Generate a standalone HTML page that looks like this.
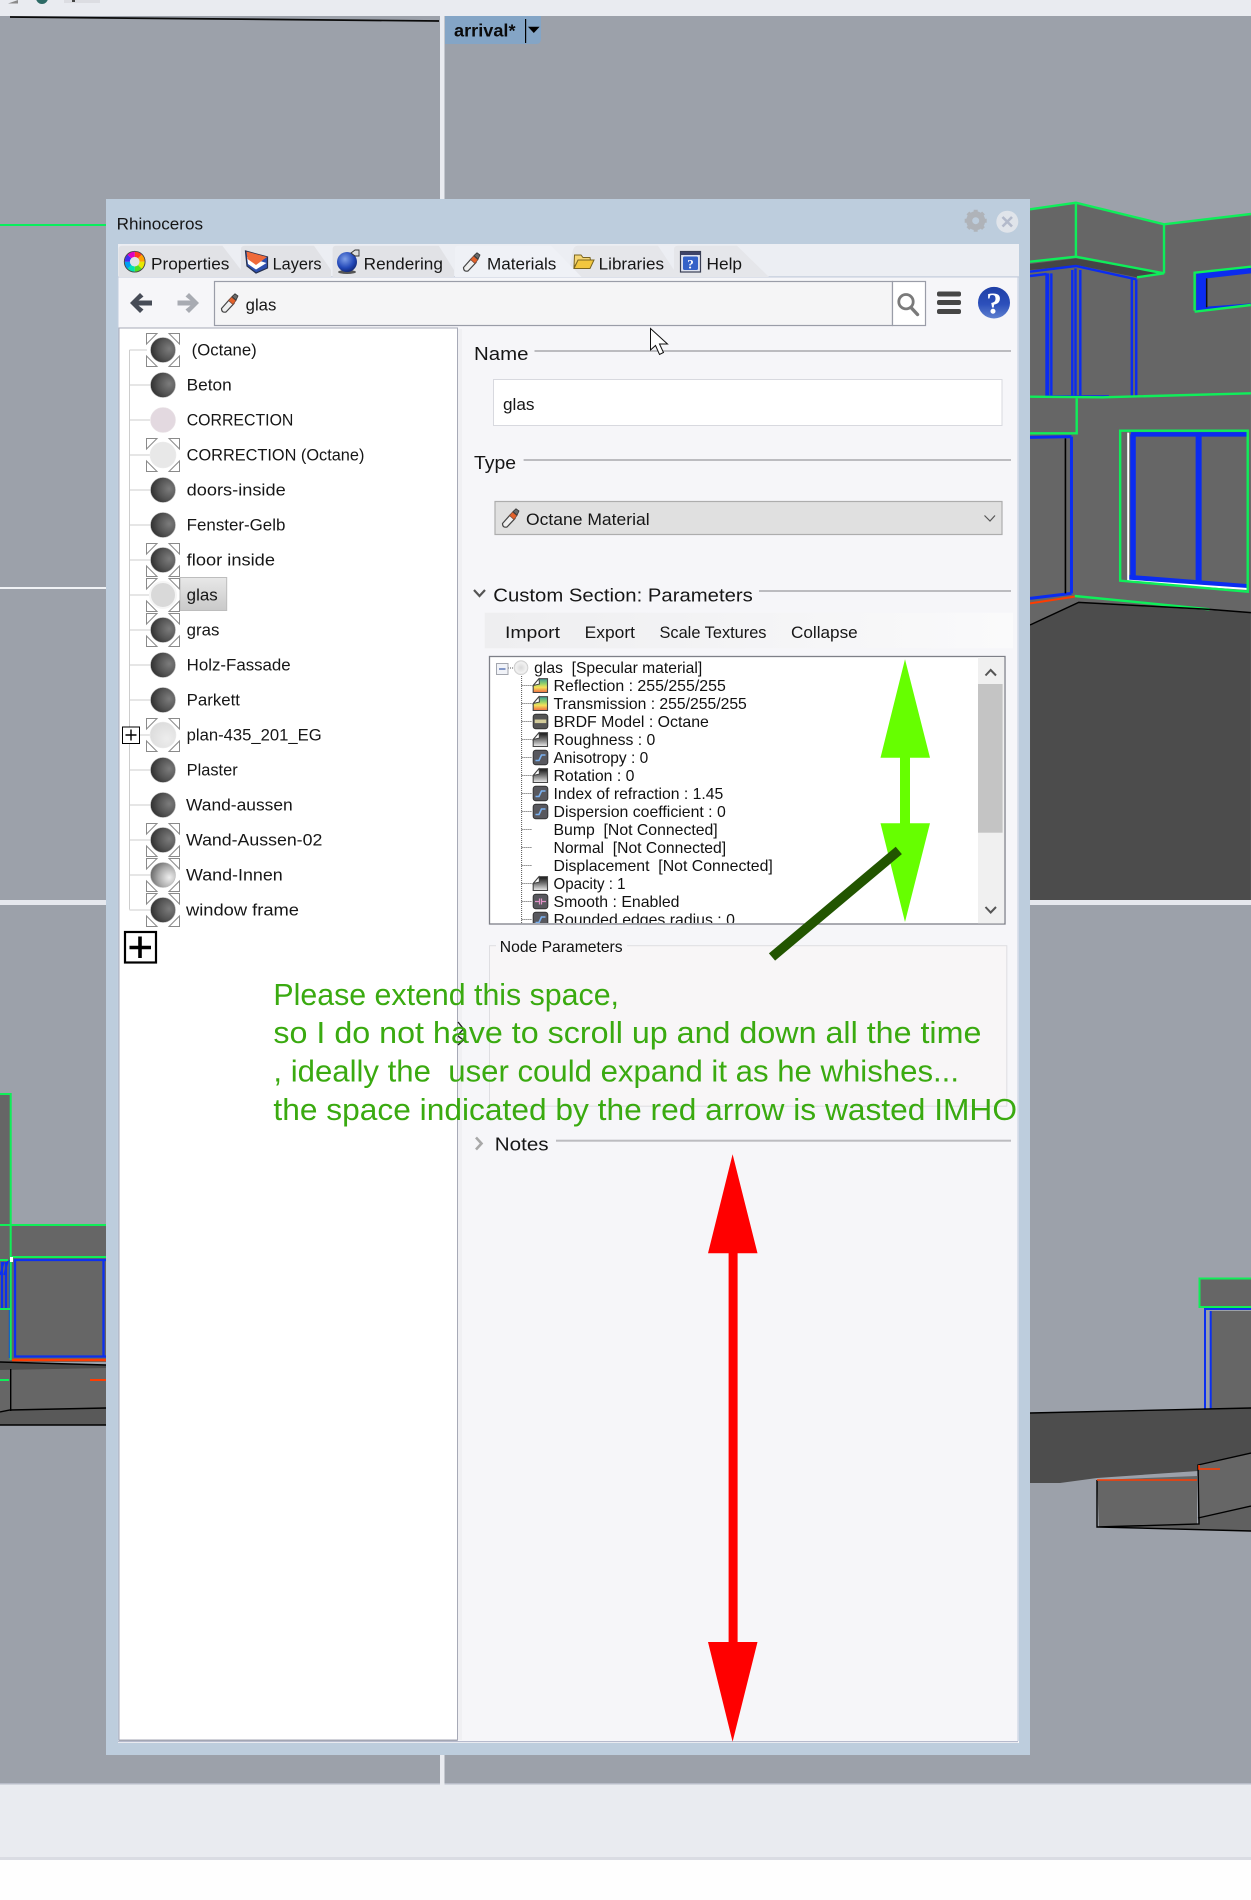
<!DOCTYPE html>
<html lang="en">
<head>
<meta charset="utf-8">
<title>Rhinoceros materials panel</title>
<style>
html,body{margin:0;padding:0;background:#fff;width:1251px;height:1900px;overflow:hidden}
svg{display:block}
text{font-family:"Liberation Sans",sans-serif;fill:#161616;white-space:pre}
.l{font-size:16.3px}
.tab{font-size:16.8px}
.h{font-size:18.5px}
.p{font-size:15.6px;fill:#111}
.a{font-size:31px;fill:#3aaa10}
.ns *{vector-effect:non-scaling-stroke}
</style>
</head>
<body>
<svg xmlns="http://www.w3.org/2000/svg" width="1251" height="1900" viewBox="0 0 1251 1900">
<defs>
<radialGradient id="sd" cx=".75" cy=".45" r=".85"><stop offset="0" stop-color="#7c7c7c"/><stop offset=".5" stop-color="#555"/><stop offset="1" stop-color="#242424"/></radialGradient>
<radialGradient id="sl" cx=".75" cy=".6" r=".85"><stop offset="0" stop-color="#eeeeee"/><stop offset=".5" stop-color="#acacac"/><stop offset="1" stop-color="#585858"/></radialGradient>
<radialGradient id="sp" cx=".65" cy=".65" r=".7"><stop offset="0" stop-color="#ededed"/><stop offset="1" stop-color="#dcdcdc"/></radialGradient>
<radialGradient id="sr" cx=".5" cy=".5" r=".55"><stop offset="0" stop-color="#d9d9d9"/><stop offset=".7" stop-color="#f2f2f2"/><stop offset="1" stop-color="#c8c8c8"/></radialGradient>
<radialGradient id="blue" cx=".4" cy=".35" r=".75"><stop offset="0" stop-color="#7f9fe8"/><stop offset=".6" stop-color="#2348b8"/><stop offset="1" stop-color="#0d1f66"/></radialGradient>
<linearGradient id="hb" x1="0" y1="0" x2="0" y2="1"><stop offset="0" stop-color="#1f3fa6"/><stop offset=".55" stop-color="#2c50bb"/><stop offset="1" stop-color="#5f80cf"/></linearGradient>
<linearGradient id="sel" x1="0" y1="0" x2="0" y2="1"><stop offset="0" stop-color="#e8e8e8"/><stop offset="1" stop-color="#c9c9c9"/></linearGradient>
<linearGradient id="strip" x1="0" y1="0" x2="1" y2="0"><stop offset="0" stop-color="#eeeef0"/><stop offset="1" stop-color="#fafafb"/></linearGradient>
<linearGradient id="rb" x1="0" y1="0" x2="0" y2="1"><stop offset="0" stop-color="#3a9a9a"/><stop offset=".35" stop-color="#8fd06a"/><stop offset=".62" stop-color="#f5e25a"/><stop offset="1" stop-color="#ee6a44"/></linearGradient>
<linearGradient id="gy" x1="0" y1="0" x2="0" y2="1"><stop offset="0" stop-color="#111"/><stop offset=".5" stop-color="#777"/><stop offset="1" stop-color="#eee"/></linearGradient>
<clipPath id="treeclip"><rect x="490" y="657" width="488" height="266"/></clipPath>
<g id="br" fill="none" stroke="#8a8a8a" stroke-width="1">
<path d="M146.5 333.5h10.5l-10.5 10.5zM179.5 333.5h-10.5l10.5 10.5zM146.5 366.5h10.5l-10.5-10.5zM179.5 366.5h-10.5l10.5-10.5z"/>
</g>
<g id="tube">
<path d="M1.5 15.5 9.5 6.5 14 10.5 6 19Q1.5 20 1.5 15.5Z" fill="#eee" stroke="#444" stroke-width="1.2"/>
<path d="M8.5 7.5 11.5 4 16 7.5 13 11.5Z" fill="#e4622b" stroke="#7a4a3a" stroke-width=".8"/>
<path d="M12 3.5 15 .8 18 3 16 7.2Z" fill="#6a6a6a" stroke="#333" stroke-width=".8"/>
</g>
<g id="crb"><path d="M.7 15V8L6.5 1.2H15V15Z" fill="url(#rb)" stroke="#444" stroke-width="1.1"/><path d="M.7 8 6.5 1.2 7 6.5Z" fill="#fff" stroke="#444" stroke-width="1"/></g>
<g id="cgy"><path d="M.7 15V8L6.5 1.2H15V15Z" fill="url(#gy)" stroke="#444" stroke-width="1.1"/><path d="M.7 8 6.5 1.2 7 6.5Z" fill="#fff" stroke="#444" stroke-width="1"/></g>
<g id="cbx"><rect x=".7" y=".7" width="14.6" height="14.6" rx="2.5" fill="#58585e" stroke="#333"/><path d="M3 11H6.5L9 5.5H13" fill="none" stroke="#7ab0ee" stroke-width="1.6"/></g>
<g id="cbr"><rect x=".7" y=".7" width="14.6" height="14.6" rx="2.5" fill="#555" stroke="#333"/><rect x="2.2" y="6" width="11.6" height="3.6" fill="#d3cc9a"/></g>
<g id="csm"><rect x=".7" y=".7" width="14.6" height="14.6" rx="2.5" fill="#58585e" stroke="#333"/><path d="M2.5 8H7M9 8H13.5M7 5V11M9 5V11" fill="none" stroke="#e292c8" stroke-width="1.2"/></g>
</defs>

<!-- background -->
<rect width="1251" height="1900" fill="#fefefe"/>
<rect width="1251" height="16" fill="#e9ebf0"/>
<path d="M8 3.5 18 0V3.5Z" fill="#8a8a8a"/>
<circle cx="42" cy="-2" r="6" fill="#2d6a66"/>
<rect x="64" y="0" width="36" height="3" fill="#dcdde2"/><rect x="72" y="0" width="3" height="2" fill="#444"/>
<rect y="16" width="1251" height="1767" fill="#9ca1aa"/>
<path d="M10 17 439 21" stroke="#0a0a0a" stroke-width="1.7"/>

<!-- upper-right building -->
<g class="ns" transform="translate(620,190) scale(.40238,.33333)">
<path d="M1019 58 1133 38 1352 103 1568 72V1268L1465 1258 1140 1237 1019 1305Z" fill="#666"/>
<path d="M1019 1305 1140 1237 1568 1268V2130H1019Z" fill="#4c4c4c"/>
<path d="M1019 222 1133 205 1345 250 1285 262 1140 226 1019 240Z" fill="#454545"/>
<g fill="none" stroke="#0b2cf0" stroke-width="2.4">
<path d="M1019 245 1133 228 1283 268"/>
<path d="M1019 258 1060 252"/>
<path d="M1072 250V618M1124 240V618M1132 235V618M1144 240V618M1272 268V618M1283 268V618"/>
<path d="M1058 618H1215" stroke-width="1.5"/>
<path d="M1019 742 1122 740M1122 740V1210M1019 1225 1122 1210" stroke-width="3"/>
</g>
<path d="M1062 250V618" stroke="#0b2cf0" stroke-width="4" fill="none"/>
<path d="M1432 250 1568 232V250L1458 265V350L1568 340V348L1432 362Z" fill="#0b2cf0"/>
<path d="M1107 745V1210" stroke="#000" stroke-width="1.6" fill="none"/>
<path d="M1458 265V352" stroke="#111" stroke-width="1.5" fill="none"/>
<g fill="none" stroke="#0b2cf0">
<path d="M1270 733H1560" stroke-width="4.5"/>
<path d="M1275 733V1162" stroke-width="5.5"/>
<path d="M1438 733V1172" stroke-width="6"/>
<path d="M1265 1162 1560 1190" stroke-width="5"/>
</g>
<path d="M1263 728V1172L1560 1197" fill="none" stroke="#fff" stroke-width="2"/>
<g fill="none" stroke="#0fee5a" stroke-width="2.4">
<path d="M1019 58 1133 38 1352 103 1568 72"/>
<path d="M1133 38V200M1352 103V250"/>
<path d="M1019 215 1133 200 1352 250 1285 262"/>
<path d="M1019 620 1200 622 1568 610"/>
<path d="M1135 625V730H1019"/>
<path d="M1428 362V248L1568 230M1428 365 1568 345"/>
<path d="M1243 722H1560V1205L1243 1172Z"/>
<path d="M1130 1218 1465 1258"/>
</g>
<path d="M1019 1240 1130 1220" stroke="#ff3c00" stroke-width="2" fill="none"/>
<path d="M1019 1305 1140 1237 1465 1258 1568 1268" stroke="#000" stroke-width="1.5" fill="none"/>
</g>

<!-- thin lines/dividers -->
<rect y="587" width="106" height="2" fill="#f0f2f5"/>
<rect y="900" width="1251" height="5" fill="#e6e8ee"/>
<rect x="440" y="16" width="4.5" height="1769" fill="#e9ebf0"/>
<rect y="224" width="106" height="2" fill="#08ee5c"/>

<!-- lower-left scene -->
<rect y="1094" width="10" height="131" fill="#666"/>
<rect y="1225" width="106" height="137" fill="#666"/>
<path d="M0 1362 106 1365V1408L10 1410 0 1412Z" fill="#666"/>
<path d="M0 1362 106 1365V1368L0 1370Z" fill="#4c4c4c"/>
<path d="M0 1412 10 1410 106 1408V1425L0 1425Z" fill="#595959"/>
<g fill="none">
<path d="M10.7 1369V1411M0 1412 10 1410 106 1408M0 1425H106M0 1362 106 1365" stroke="#000" stroke-width="1.4"/>
<path d="M15 1260H103.5V1356.5H15ZM103.5 1356.5H106M103.5 1260H106M10 1260V1358M2 1262V1308M6 1262V1308" stroke="#0c30f0" stroke-width="2.3"/>
<path d="M0 1275 4 1262M4 1275 8 1261" stroke="#0c30f0" stroke-width="1.5"/>
<path d="M0 1094H10.7V1360M0 1225H106M12 1257H106M0 1260H8M0 1309H10M0 1380H9" stroke="#10ee58" stroke-width="2"/>
<path d="M12 1360H106" stroke="#ff3c00" stroke-width="2.6"/>
<path d="M90 1380H106" stroke="#ff3c00" stroke-width="2"/>
</g>
<rect x="10" y="1257" width="3" height="5" fill="#fff"/>

<!-- lower-right scene -->
<rect x="1211" y="1311" width="40" height="100" fill="#666"/>
<rect x="1199" y="1278" width="52" height="29" fill="#666"/>
<path d="M1205 1410V1309H1251M1210.7 1410V1311" fill="none" stroke="#0c30f0" stroke-width="2"/>
<path d="M1251 1278.5H1199.5V1307H1251" fill="none" stroke="#10ee58" stroke-width="2"/>
<path d="M1097 1480 1197 1476V1524L1099 1527Z" fill="#666"/>
<path d="M1198 1465 1251 1453V1506L1198 1518Z" fill="#666"/>
<path d="M1198 1518 1251 1506V1531L1099 1527 1199 1524Z" fill="#606060"/>
<path d="M1030 1413 1251 1408V1453L1198 1465V1471L1097 1478 1060 1483H1030Z" fill="#4d4d4d"/>
<path d="M1030 1413 1251 1408" stroke="#000" stroke-width="1.4" fill="none"/>
<path d="M1097 1480V1527L1199 1524 1198 1465 1251 1453M1198 1518 1251 1506M1099 1527 1251 1531M1199 1518V1524" fill="none" stroke="#000" stroke-width="1.4"/>
<path d="M1097 1480H1197M1199 1465V1469H1220" fill="none" stroke="#ff3c00" stroke-width="1.6"/>

<!-- bottom band -->
<rect y="1783" width="1251" height="74" fill="#e9ebf0"/>
<rect y="1783" width="1251" height="1.5" fill="#b8bcc8"/>
<rect x="440" y="1755" width="4.5" height="30" fill="#e9ebf0"/>
<rect y="1857" width="1251" height="3" fill="#dadce3"/>

<!-- dialog -->
<rect x="106" y="199" width="924" height="1556" fill="#bdcddd"/>
<text x="116.7" y="229.3" font-size="16.8" textLength="86.3" lengthAdjust="spacingAndGlyphs">Rhinoceros</text>
<g transform="translate(975.7,220.7)">
<circle r="6.5" fill="none" stroke="#afb3b9" stroke-width="6"/>
<path d="M-2 -11h4v4h-4zM-2 7h4v4h-4zM-11 -2h4v4h-4zM7 -2h4v4h-4z" fill="#afb3b9"/>
<path d="M-2 -11h4v4h-4zM-2 7h4v4h-4zM-11 -2h4v4h-4zM7 -2h4v4h-4z" fill="#afb3b9" transform="rotate(45)"/>
</g>
<circle cx="1007.3" cy="221.7" r="11" fill="#e0e4ea"/>
<path d="M1002.5 217 1012 226.5M1012 217 1002.5 226.5" stroke="#b3bacb" stroke-width="2.6"/>

<rect x="118" y="244" width="901" height="33" fill="#eceef3"/>
<rect x="118" y="277" width="901" height="1466" fill="#f6f6f9"/>
<rect x="1017.5" y="277" width="1.2" height="1464" fill="#c2cee0"/>
<rect x="117.5" y="277" width="1" height="1464" fill="#c2cee0"/>
<rect x="118" y="276.3" width="901" height="1.2" fill="#c3cbda"/>

<!-- tabs -->
<path d="M118.5 277V249Q118.5 245.7 122 245.7H222.4L241 270V277Z" fill="#e1e2e6"/>
<path d="M241 277V249Q241 245.7 245 245.7H314L331 270V277Z" fill="#e1e2e6"/>
<path d="M332.6 277V249Q332.6 245.7 336 245.7H438.8L454 270V277Z" fill="#e1e2e6"/>
<path d="M568 277 573 250Q574 245.7 578 245.7H658L674 270V277Z" fill="#e5e6ea"/>
<path d="M674 277V249Q674 245.7 678 245.7H737L769 277Z" fill="#e5e6ea"/>
<path d="M455 277V249Q455 245.7 459 245.7H551L581.6 277Z" fill="#eff1f6"/>

<g fill="none" stroke-width="5.4">
<path d="M134.7 254.2A7.5 7.5 0 0 1 140 256.4" stroke="#ff3a20"/>
<path d="M140 256.4A7.5 7.5 0 0 1 142.2 261.7" stroke="#ffa000"/>
<path d="M142.2 261.7A7.5 7.5 0 0 1 140 267" stroke="#e8e800"/>
<path d="M140 267A7.5 7.5 0 0 1 134.7 269.2" stroke="#50e020"/>
<path d="M134.7 269.2A7.5 7.5 0 0 1 129.4 267" stroke="#00e0b0"/>
<path d="M129.4 267A7.5 7.5 0 0 1 127.2 261.7" stroke="#00a0f0"/>
<path d="M127.2 261.7A7.5 7.5 0 0 1 129.4 256.4" stroke="#4030f0"/>
<path d="M129.4 256.4A7.5 7.5 0 0 1 134.7 254.2" stroke="#e000c0"/>
</g>
<circle cx="134.7" cy="261.7" r="10.4" fill="none" stroke="#444" stroke-width=".9"/>

<path d="M245.5 251 267.5 257V268L256 273 247 266Z" fill="#2d4fae" stroke="#25304f" stroke-width="1.2"/>
<path d="M247 257 266.5 263 256 269.5 248 264Z" fill="#fff"/>
<path d="M246.5 251.5 267 257 256 265 247.5 259Z" fill="#ef6a3a"/>

<ellipse cx="347" cy="272" rx="9" ry="2" fill="#555"/>
<circle cx="347" cy="262" r="10" fill="url(#blue)"/>
<path d="M351 253 355 250H359V256H355Z" fill="#ddd" stroke="#333" stroke-width=".9"/>
<use href="#tube" x="462" y="252"/>

<path d="M574 267 574.5 255H581L583 257.5H590L590.5 260H579Z" fill="#f5d675" stroke="#7a6520" stroke-width="1"/>
<path d="M574 268.5 578 260H594L590 268.5Z" fill="#f2c73f" stroke="#7a6520" stroke-width="1"/>

<rect x="680.5" y="251.5" width="20" height="20.5" fill="#dfe3ee" stroke="#3a3f55" stroke-width="1.2"/>
<rect x="681" y="252" width="19" height="3" fill="#3f4468"/>
<rect x="683" y="256.5" width="15" height="13.5" rx="1.5" fill="#3562c8"/>
<text x="690.5" y="268.5" font-size="13" font-weight="bold" text-anchor="middle" style="fill:#fff;font-family:'Liberation Serif',serif">?</text>

<text class="tab" x="151" y="269.3" textLength="78.4" lengthAdjust="spacingAndGlyphs">Properties</text>
<text class="tab" x="272.6" y="269.3" textLength="49" lengthAdjust="spacingAndGlyphs">Layers</text>
<text class="tab" x="363.7" y="269.3" textLength="79.2" lengthAdjust="spacingAndGlyphs">Rendering</text>
<text class="tab" x="487" y="269.3" textLength="69.3" lengthAdjust="spacingAndGlyphs">Materials</text>
<text class="tab" x="598.7" y="269.3" textLength="65.3" lengthAdjust="spacingAndGlyphs">Libraries</text>
<text class="tab" x="706.5" y="269.3" textLength="35.5" lengthAdjust="spacingAndGlyphs">Help</text>

<!-- toolbar -->
<path d="M130 303 140 293 143.5 296.5 138.5 300.5H152V305.5H138.5L143.5 309.5 140 313Z" fill="#474c57"/>
<path d="M199 303 189 293 185.5 296.5 190.5 300.5H177.5V305.5H190.5L185.5 309.5 189 313Z" fill="#a8abb2"/>
<rect x="214.5" y="281.5" width="678" height="44" fill="#f5f5f6" stroke="#9a9da8" stroke-width="1.2"/>
<rect x="892.5" y="281.5" width="33" height="44" fill="#fff" stroke="#9a9da8" stroke-width="1.2"/>
<circle cx="906" cy="301.7" r="7.2" fill="none" stroke="#7a7a7a" stroke-width="2.8"/>
<path d="M911 307.5 917.5 314.5" stroke="#7a7a7a" stroke-width="3.4" stroke-linecap="round"/>
<use href="#tube" x="220" y="293"/>
<text class="l" x="245.7" y="310.7" textLength="30.6" lengthAdjust="spacingAndGlyphs">glas</text>
<g fill="#464646"><rect x="937" y="291.5" width="24" height="5" rx="2"/><rect x="937" y="300" width="24" height="5" rx="2"/><rect x="937" y="309" width="24" height="5" rx="2"/></g>
<ellipse cx="994" cy="302.7" rx="16" ry="15.8" fill="url(#hb)"/>
<text x="994" y="313.5" font-size="31" font-weight="bold" text-anchor="middle" style="fill:#fff;font-family:'Liberation Serif',serif">?</text>

<!-- list panel -->
<rect x="119" y="328" width="338.5" height="1412" fill="#fff" stroke="#a7aab7" stroke-width="1"/>
<rect x="119" y="1739.5" width="338.5" height="2" fill="#a3a6b3"/>
<rect x="458" y="329" width="4" height="1411" fill="#f0f0f3"/>
<rect x="118" y="1741" width="900" height="1.2" fill="#b6bacd"/>
<path d="M129.5 350V909.5" stroke="#cdcdcd" stroke-width="1"/>
<path d="M129.5 350H147M129.5 385H150M129.5 420H150M129.5 455H150M129.5 490H150M129.5 525H150M129.5 560H150M129.5 595H150M129.5 630H150M129.5 665H150M129.5 700H150M140 735H150M129.5 770H150M129.5 805H150M129.5 840H150M129.5 875H150M129.5 910H150" stroke="#cdcdcd" stroke-width="1"/>

<rect x="180" y="577.5" width="46.7" height="33" fill="url(#sel)" stroke="#bdbdbd" stroke-width="1"/>

<use href="#br" y="0"/><use href="#br" y="105"/><use href="#br" y="210"/><use href="#br" y="245"/><use href="#br" y="280"/><use href="#br" y="385"/><use href="#br" y="490"/><use href="#br" y="525"/><use href="#br" y="560"/>

<g stroke="#bdbdbd" stroke-width=".6">
<circle cx="163" cy="350" r="12.5" fill="url(#sd)"/>
<circle cx="163" cy="385" r="12.5" fill="url(#sd)"/>
<circle cx="163" cy="420" r="12.5" fill="#e3d9e0" stroke="#e9e2e6"/>
<circle cx="163" cy="455" r="13" fill="#e8e8e8" stroke="#ececec"/>
<circle cx="163" cy="490" r="12.5" fill="url(#sd)"/>
<circle cx="163" cy="525" r="12.5" fill="url(#sd)"/>
<circle cx="163" cy="560" r="12.5" fill="url(#sd)"/>
<circle cx="163" cy="595" r="13" fill="#d9d9d9" stroke="#f5f5f5" stroke-width="2"/>
<circle cx="163" cy="630" r="12.5" fill="url(#sd)"/>
<circle cx="163" cy="665" r="12.5" fill="url(#sd)"/>
<circle cx="163" cy="700" r="12.5" fill="url(#sd)"/>
<circle cx="163" cy="735" r="13" fill="url(#sp)" stroke="#ececec"/>
<circle cx="163" cy="770" r="12.5" fill="url(#sd)"/>
<circle cx="163" cy="805" r="12.5" fill="url(#sd)"/>
<circle cx="163" cy="840" r="12.5" fill="url(#sd)"/>
<circle cx="163" cy="875" r="12.5" fill="url(#sl)"/>
<circle cx="163" cy="910" r="12.5" fill="url(#sd)"/>
</g>

<rect x="122.5" y="727" width="17" height="16.5" fill="#fff" stroke="#000" stroke-width="1"/>
<path d="M125.5 735H136.5M131 729.5V740.5" stroke="#000" stroke-width="1.4"/>
<rect x="125" y="932" width="31" height="30.5" fill="#fff" stroke="#000" stroke-width="2.2"/>
<path d="M129.5 947.5H151M140 936.5V958" stroke="#000" stroke-width="3.6"/>

<text class="l" x="191.7" y="355.7" textLength="65" lengthAdjust="spacingAndGlyphs">(Octane)</text>
<text class="l" x="186.7" y="390.7" textLength="45" lengthAdjust="spacingAndGlyphs">Beton</text>
<text class="l" x="186.7" y="425.7" textLength="106.7" lengthAdjust="spacingAndGlyphs">CORRECTION</text>
<text class="l" x="186.7" y="460.7" textLength="177.7" lengthAdjust="spacingAndGlyphs">CORRECTION (Octane)</text>
<text class="l" x="186.7" y="495.7" textLength="99" lengthAdjust="spacingAndGlyphs">doors-inside</text>
<text class="l" x="186.7" y="530.7" textLength="98.7" lengthAdjust="spacingAndGlyphs">Fenster-Gelb</text>
<text class="l" x="186.7" y="565.7" textLength="88.3" lengthAdjust="spacingAndGlyphs">floor inside</text>
<text class="l" x="186.7" y="600.7" textLength="31" lengthAdjust="spacingAndGlyphs">glas</text>
<text class="l" x="186.7" y="635.7" textLength="32.7" lengthAdjust="spacingAndGlyphs">gras</text>
<text class="l" x="186.7" y="670.7" textLength="104" lengthAdjust="spacingAndGlyphs">Holz-Fassade</text>
<text class="l" x="186.7" y="705.7" textLength="53.3" lengthAdjust="spacingAndGlyphs">Parkett</text>
<text class="l" x="186.7" y="740.7" textLength="135" lengthAdjust="spacingAndGlyphs">plan-435_201_EG</text>
<text class="l" x="186.7" y="775.7" textLength="51" lengthAdjust="spacingAndGlyphs">Plaster</text>
<text class="l" x="186" y="810.7" textLength="106.7" lengthAdjust="spacingAndGlyphs">Wand-aussen</text>
<text class="l" x="186" y="845.7" textLength="136.3" lengthAdjust="spacingAndGlyphs">Wand-Aussen-02</text>
<text class="l" x="186" y="880.7" textLength="96.7" lengthAdjust="spacingAndGlyphs">Wand-Innen</text>
<text class="l" x="186" y="915.7" textLength="113" lengthAdjust="spacingAndGlyphs">window frame</text>

<!-- right panel -->
<text class="h" x="474" y="360" textLength="54.5" lengthAdjust="spacingAndGlyphs">Name</text>
<rect x="534.5" y="350" width="476.5" height="2" fill="#bcbcc0"/>
<rect x="493.5" y="379.5" width="508.5" height="46" fill="#fff" stroke="#d8d9df" stroke-width="1"/>
<text class="l" x="503" y="410" textLength="31.5" lengthAdjust="spacingAndGlyphs">glas</text>

<text class="h" x="474" y="469" textLength="42" lengthAdjust="spacingAndGlyphs">Type</text>
<rect x="523.6" y="459" width="487.4" height="2" fill="#bcbcc0"/>
<rect x="495" y="501.5" width="507" height="33" fill="#e0e0e0" stroke="#adadad" stroke-width="1.2"/>
<use href="#tube" x="501" y="508"/>
<text class="l" x="526" y="525" textLength="123.6" lengthAdjust="spacingAndGlyphs">Octane Material</text>
<path d="M984.5 515.5 990 521 995 515.5" fill="none" stroke="#555" stroke-width="1.2"/>

<path d="M474 590 479.5 596 485 590" fill="none" stroke="#555" stroke-width="2.2"/>
<text class="h" x="493.3" y="601.7" textLength="259.5" lengthAdjust="spacingAndGlyphs">Custom Section: Parameters</text>
<rect x="759" y="590" width="252" height="2" fill="#bcbcc0"/>

<rect x="484.7" y="612.7" width="528.3" height="35.6" fill="url(#strip)"/>
<text class="l" x="505" y="638" textLength="55" lengthAdjust="spacingAndGlyphs">Import</text>
<text class="l" x="584.7" y="638" textLength="50.3" lengthAdjust="spacingAndGlyphs">Export</text>
<text class="l" x="659.5" y="638" textLength="107" lengthAdjust="spacingAndGlyphs">Scale Textures</text>
<text class="l" x="791" y="638" textLength="66.7" lengthAdjust="spacingAndGlyphs">Collapse</text>

<!-- parameter tree -->
<rect x="489.5" y="656.5" width="515.5" height="267.5" fill="#fff" stroke="#7e8088" stroke-width="1.3"/>
<rect x="978" y="657" width="26" height="266.5" fill="#f0f0f0"/>
<rect x="978" y="684" width="24.6" height="148.7" fill="#c4c4c4"/>
<path d="M985.5 675.5 990.7 670 996 675.5M985.5 907 990.7 912.5 996 907" fill="none" stroke="#555" stroke-width="2"/>

<g clip-path="url(#treeclip)">
<path d="M521.6 676V923" stroke="#555" stroke-width="1" stroke-dasharray="1 1"/>
<path d="M521.6 685.5H532M521.6 703.5H532M521.6 721.5H532M521.6 739.5H532M521.6 757.5H532M521.6 775.5H532M521.6 793.5H532M521.6 811.5H532M521.6 829.5H532M521.6 847.5H532M521.6 865.5H532M521.6 883.5H532M521.6 901.5H532M521.6 919.5H532" stroke="#555" stroke-width="1" stroke-dasharray="1 1"/>
<path d="M508 668H514" stroke="#555" stroke-dasharray="1 1"/>
<rect x="496.5" y="663.5" width="11.5" height="11" fill="#f1f3f8" stroke="#a3a6ae"/>
<path d="M499 669H505.5" stroke="#3c5ba8" stroke-width="1.2"/>
<circle cx="521" cy="667.7" r="7" fill="url(#sr)" stroke="#c9c9c9" stroke-width=".6"/>
<use href="#crb" x="532.5" y="677.5"/>
<use href="#crb" x="532.5" y="695.5"/>
<use href="#cbr" x="532.5" y="713.5"/>
<use href="#cgy" x="532.5" y="731.5"/>
<use href="#cbx" x="532.5" y="749.5"/>
<use href="#cgy" x="532.5" y="767.5"/>
<use href="#cbx" x="532.5" y="785.5"/>
<use href="#cbx" x="532.5" y="803.5"/>
<use href="#cgy" x="532.5" y="875.5"/>
<use href="#csm" x="532.5" y="893.5"/>
<use href="#cbx" x="532.5" y="911.5"/>
<text class="p" x="534.2" y="673" textLength="168" lengthAdjust="spacingAndGlyphs">glas  [Specular material]</text>
<text class="p" x="553.5" y="691" textLength="172.3" lengthAdjust="spacingAndGlyphs">Reflection : 255/255/255</text>
<text class="p" x="553.5" y="709" textLength="193.3" lengthAdjust="spacingAndGlyphs">Transmission : 255/255/255</text>
<text class="p" x="553.5" y="727" textLength="155.4" lengthAdjust="spacingAndGlyphs">BRDF Model : Octane</text>
<text class="p" x="553.5" y="745" textLength="101.8" lengthAdjust="spacingAndGlyphs">Roughness : 0</text>
<text class="p" x="553.5" y="763" textLength="94.7" lengthAdjust="spacingAndGlyphs">Anisotropy : 0</text>
<text class="p" x="553.5" y="781" textLength="81" lengthAdjust="spacingAndGlyphs">Rotation : 0</text>
<text class="p" x="553.5" y="799" textLength="169.8" lengthAdjust="spacingAndGlyphs">Index of refraction : 1.45</text>
<text class="p" x="553.5" y="817" textLength="172.3" lengthAdjust="spacingAndGlyphs">Dispersion coefficient : 0</text>
<text class="p" x="553.5" y="835" textLength="164.2" lengthAdjust="spacingAndGlyphs">Bump  [Not Connected]</text>
<text class="p" x="553.5" y="853" textLength="172.6" lengthAdjust="spacingAndGlyphs">Normal  [Not Connected]</text>
<text class="p" x="553.5" y="871" textLength="219.3" lengthAdjust="spacingAndGlyphs">Displacement  [Not Connected]</text>
<text class="p" x="553.5" y="889" textLength="72" lengthAdjust="spacingAndGlyphs">Opacity : 1</text>
<text class="p" x="553.5" y="907" textLength="126" lengthAdjust="spacingAndGlyphs">Smooth : Enabled</text>
<text class="p" x="553.5" y="925" textLength="181.4" lengthAdjust="spacingAndGlyphs">Rounded edges radius : 0</text>
</g>

<!-- node parameters -->
<rect x="489.5" y="945.7" width="517.3" height="160.5" fill="#f8f6f7" stroke="#dedee2" stroke-width="1"/>
<rect x="496" y="940" width="131" height="10" fill="#f7f6f8"/>
<text class="p" x="499.8" y="952" textLength="122.8" lengthAdjust="spacingAndGlyphs">Node Parameters</text>

<!-- notes -->
<path d="M476 1137.5 481.5 1143.5 476 1149.5" fill="none" stroke="#a8a8a8" stroke-width="2.6"/>
<text class="h" x="494.8" y="1150.7" textLength="53.8" lengthAdjust="spacingAndGlyphs">Notes</text>
<rect x="556" y="1139.7" width="455" height="2" fill="#bcbcc0"/>

<!-- resize cursor -->
<path d="M458 1022 463.5 1029 458 1035M458 1036 463.5 1040 458 1045" fill="none" stroke="#222" stroke-width="1.4"/>
<!-- mouse cursor -->
<path d="M650.5 328.5V350L655.5 345.5 659.5 354.5 663.5 352.5 659.5 344H667.5Z" fill="#fff" stroke="#111" stroke-width="1"/>

<!-- annotation arrows -->
<path d="M905 659.3 930 757.7H910V823.3H930L905 922 880.5 823.3H900V757.7H880.5Z" fill="#66ff00"/>
<path d="M898.8 850.4 772 957" stroke="#225500" stroke-width="9.6" fill="none"/>
<path d="M732.6 1154.3 757.5 1253.3H737.6V1642H757.5L732.6 1741.7 708 1642H728.6V1253.3H708Z" fill="#ff0000"/>

<!-- annotation text -->
<text class="a" x="273.4" y="1004.8" textLength="345.6" lengthAdjust="spacingAndGlyphs">Please extend this space,</text>
<text class="a" x="273.4" y="1043.2" textLength="708" lengthAdjust="spacingAndGlyphs">so I do not have to scroll up and down all the time</text>
<text class="a" x="273.4" y="1081.6" textLength="685.6" lengthAdjust="spacingAndGlyphs">, ideally the  user could expand it as he whishes...</text>
<text class="a" x="273.4" y="1120" textLength="743.6" lengthAdjust="spacingAndGlyphs">the space indicated by the red arrow is wasted IMHO</text>

<!-- arrival tab -->
<path d="M445 16H541V39Q541 44 536 44H445Z" fill="#84a5c6"/>
<text x="454" y="36.7" font-size="17.5" font-weight="bold" textLength="61.5" lengthAdjust="spacingAndGlyphs" style="fill:#0a0a0a">arrival*</text>
<rect x="525" y="19" width="1.2" height="24" fill="#000"/>
<path d="M528 26.7H539.6L533.8 33Z" fill="#000"/>
</svg>
</body>
</html>
